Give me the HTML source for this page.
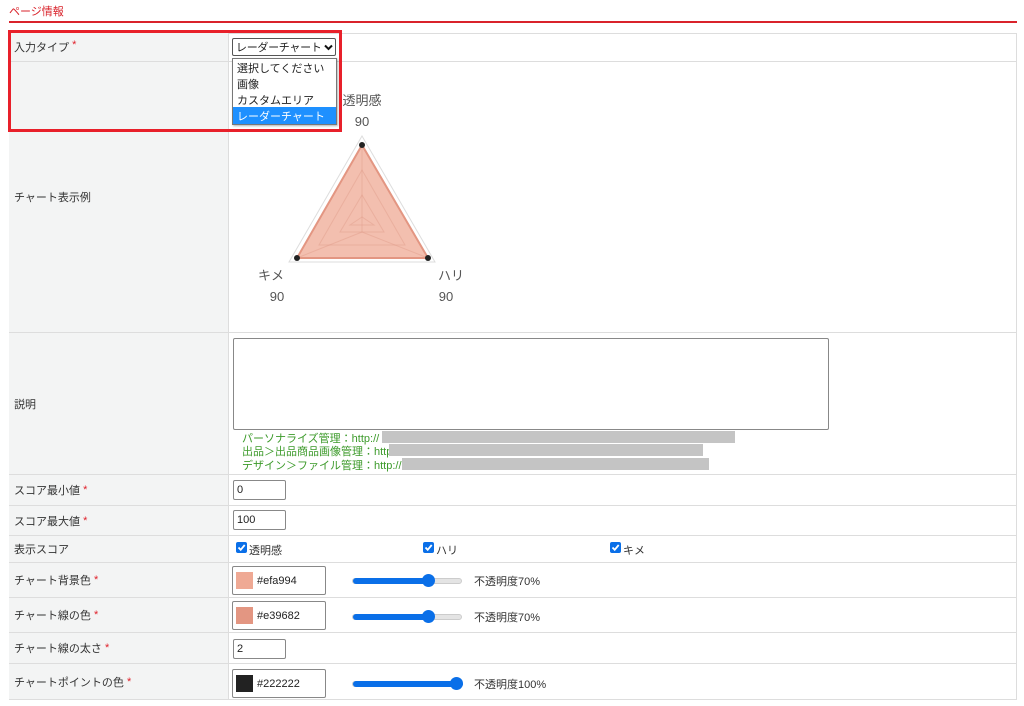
<!DOCTYPE html>
<html><head><meta charset="utf-8"><style>
*{box-sizing:border-box;margin:0;padding:0}
body{width:1024px;height:706px;background:#fff;font-family:"Liberation Sans","Noto Sans CJK JP",sans-serif;font-size:11px;color:#333;position:relative;overflow:hidden}
.a{position:absolute;white-space:nowrap}
.lbl{position:absolute;left:9px;width:219px;background:#f3f4f4;border-bottom:1px solid #ddd;padding-left:5px;display:flex;align-items:center}
.val{position:absolute;left:228px;width:788px;border-bottom:1px solid #ddd;border-left:1px solid #ddd}
.req{color:#e0202a}
.inp{position:absolute;border:1px solid #888;border-radius:2px;background:#fff;font-size:11px;padding-left:3px;display:flex;align-items:center;color:#222;white-space:nowrap}
.sl{position:absolute;height:6px;border-radius:3px;background:#e4e4e4;border:1px solid #ccc}
.sl i{position:absolute;left:0;top:-1px;height:6px;border-radius:3px;background:#0a6fe8}
.sl b{position:absolute;top:-5px;width:13px;height:13px;border-radius:50%;background:#0a6fe8}
.cb{position:absolute;width:11px;height:11px;background:#0a6fe8;border-radius:2px}
.cb svg{position:absolute;left:0;top:0}
.g{position:absolute;color:#3c9a2a;font-size:11px;left:242px;white-space:nowrap}
.gb{position:absolute;background:#c4c4c4;height:12px}
</style></head><body>
<div class="a" style="left:9px;top:3px;color:#d9232b;font-size:11px">ページ情報</div>
<div class="a" style="left:9px;top:21px;width:1008px;height:2px;background:#d9232b"></div>
<div class="a" style="left:9px;top:33px;width:1008px;height:667px;border:1px solid #ddd;border-bottom:none"></div>

<div class="lbl" style="top:33px;height:29px;align-items:flex-start;padding-top:6px">入力タイプ&nbsp;<span class="req">*</span></div>
<div class="val" style="top:33px;height:29px"></div>
<div class="lbl" style="top:62px;height:271px">チャート表示例</div>
<div class="val" style="top:62px;height:271px"></div>
<div class="lbl" style="top:333px;height:142px">説明</div>
<div class="val" style="top:333px;height:142px"></div>
<div class="lbl" style="top:475px;height:31px">スコア最小値&nbsp;<span class="req">*</span></div>
<div class="val" style="top:475px;height:31px"></div>
<div class="lbl" style="top:506px;height:30px">スコア最大値&nbsp;<span class="req">*</span></div>
<div class="val" style="top:506px;height:30px"></div>
<div class="lbl" style="top:536px;height:27px;align-items:flex-start;padding-top:5px">表示スコア</div>
<div class="val" style="top:536px;height:27px"></div>
<div class="lbl" style="top:563px;height:35px">チャート背景色&nbsp;<span class="req">*</span></div>
<div class="val" style="top:563px;height:35px"></div>
<div class="lbl" style="top:598px;height:35px">チャート線の色&nbsp;<span class="req">*</span></div>
<div class="val" style="top:598px;height:35px"></div>
<div class="lbl" style="top:633px;height:31px">チャート線の太さ&nbsp;<span class="req">*</span></div>
<div class="val" style="top:633px;height:31px"></div>
<div class="lbl" style="top:664px;height:36px">チャートポイントの色&nbsp;<span class="req">*</span></div>
<div class="val" style="top:664px;height:36px"></div>

<svg class="a" style="left:228px;top:62px" width="300" height="271">
<polygon points="134,74 61,200 207,200" fill="#fff" stroke="#ddd"/>
<polygon points="134,83 69,196 200,196" fill="#efa994" fill-opacity="0.75" stroke="#e39682" stroke-width="2"/>
<g stroke="#d9917f" stroke-opacity=".35" fill="none">
<polygon points="134,108 91,183 177,183"/>
<polygon points="134,133 112,170 156,170"/>
<polygon points="134,155 122,163 146,163"/>
<line x1="134" y1="83" x2="134" y2="170"/><line x1="69" y1="196" x2="134" y2="170"/><line x1="200" y1="196" x2="134" y2="170"/></g>
<circle cx="134" cy="83" r="3" fill="#222"/><circle cx="69" cy="196" r="3" fill="#222"/><circle cx="200" cy="196" r="3" fill="#222"/>
<g font-family="Liberation Sans,Noto Sans CJK JP,sans-serif" font-size="13" fill="#555" text-anchor="middle">
<text x="134" y="43">透明感</text><text x="134" y="64">90</text>
<text x="43" y="218">キメ</text><text x="49" y="239">90</text>
<text x="223" y="218">ハリ</text><text x="218" y="239">90</text></g>
</svg>

<div class="inp" style="left:232px;top:38px;width:104px;height:18px;border-color:#555;overflow:hidden;letter-spacing:-0.3px">レーダーチャート<svg style="margin-left:2px;flex:none" width="9" height="7" viewBox="0 0 9 7"><path d="M1 1.5 L4.5 5 L8 1.5" stroke="#111" stroke-width="2" fill="none"/></svg></div>
<div class="a" style="left:232px;top:58px;width:105px;height:67px;background:#fff;border:1px solid #777;box-shadow:1px 1px 2px rgba(0,0,0,.3);font-size:11px;color:#222">
<div style="height:16px;padding:1px 4px">選択してください</div>
<div style="height:16px;padding:1px 4px">画像</div>
<div style="height:16px;padding:1px 4px">カスタムエリア</div>
<div style="height:17px;padding:1px 4px;background:#1e90ff;color:#fff">レーダーチャート</div></div>
<div class="a" style="left:8px;top:30px;width:334px;height:102px;border:3px solid #e8202a"></div>

<div class="a" style="left:233px;top:338px;width:596px;height:92px;border:1px solid #888;border-radius:2px"></div>
<div class="g" style="top:430px">パーソナライズ管理：http://</div><div class="gb" style="left:382px;top:431px;width:353px"></div>
<div class="g" style="top:443px">出品＞出品商品画像管理：http://</div><div class="gb" style="left:389px;top:444px;width:314px"></div>
<div class="g" style="top:457px">デザイン＞ファイル管理：http://</div><div class="gb" style="left:402px;top:458px;width:307px"></div>

<div class="inp" style="left:233px;top:480px;width:53px;height:20px">0</div>
<div class="inp" style="left:233px;top:510px;width:53px;height:20px">100</div>

<div class="cb" style="left:236px;top:542px"><svg width="11" height="11"><path d="M2.5 5.5 L4.7 7.8 L8.7 3" stroke="#fff" stroke-width="1.8" fill="none"/></svg></div><div class="a" style="left:249px;top:542px">透明感</div>
<div class="cb" style="left:423px;top:542px"><svg width="11" height="11"><path d="M2.5 5.5 L4.7 7.8 L8.7 3" stroke="#fff" stroke-width="1.8" fill="none"/></svg></div><div class="a" style="left:436px;top:542px">ハリ</div>
<div class="cb" style="left:610px;top:542px"><svg width="11" height="11"><path d="M2.5 5.5 L4.7 7.8 L8.7 3" stroke="#fff" stroke-width="1.8" fill="none"/></svg></div><div class="a" style="left:623px;top:542px">キメ</div>

<div class="inp" style="left:232px;top:566px;width:94px;height:29px"><span style="width:17px;height:17px;background:#efa994;margin-right:4px"></span>#efa994</div>
<div class="sl" style="left:352px;top:578px;width:110px"><i style="width:76px"></i><b style="left:69px"></b></div>
<div class="a" style="left:474px;top:573px">不透明度70%</div>
<div class="inp" style="left:232px;top:601px;width:94px;height:29px"><span style="width:17px;height:17px;background:#e39682;margin-right:4px"></span>#e39682</div>
<div class="sl" style="left:352px;top:614px;width:110px"><i style="width:76px"></i><b style="left:69px"></b></div>
<div class="a" style="left:474px;top:609px">不透明度70%</div>
<div class="inp" style="left:233px;top:639px;width:53px;height:20px">2</div>
<div class="inp" style="left:232px;top:669px;width:94px;height:29px"><span style="width:17px;height:17px;background:#222;margin-right:4px"></span>#222222</div>
<div class="sl" style="left:352px;top:681px;width:110px"><i style="width:110px"></i><b style="left:97px"></b></div>
<div class="a" style="left:474px;top:676px">不透明度100%</div>
</body></html>
